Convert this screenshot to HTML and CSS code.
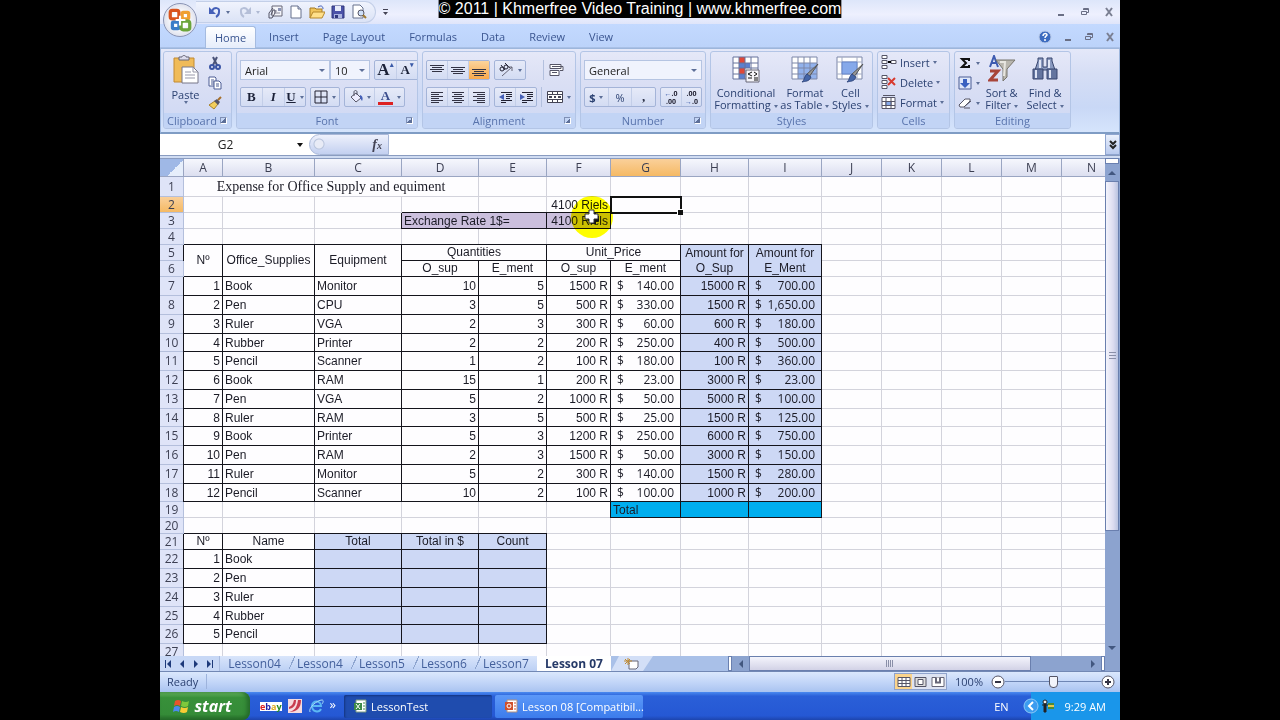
FILE: index.html
```html
<!DOCTYPE html>
<html lang="en">
<head>
    <meta charset="UTF-8">
    <meta name="viewport" content="width=device-width, initial-scale=1.0">
    <title>LessonTest - Microsoft Excel</title>
    <link rel="stylesheet" href="styles.css">
</head>
<body>
    <div class="banner">© 2011 | Khmerfree Video Training | www.khmerfree.com</div>

    <div class="app">
        <!-- Title bar and tabs -->
        <header class="top">
            <button class="office" aria-label="Office button">
                <svg viewBox="0 0 24 24" width="26" height="26" fill="none" stroke-width="3">
                    <rect x="3" y="3" width="8" height="8" rx="2" stroke="#d9541e"/>
                    <rect x="14" y="5" width="6" height="6" rx="1" stroke="#f0a030"/>
                    <rect x="5" y="14" width="6" height="6" rx="1" stroke="#3b7dc8"/>
                    <rect x="13" y="13" width="8" height="8" rx="2" stroke="#6ba53a"/>
                    <path d="M8 12h9M12 8v9" stroke="#fff" stroke-width="2"/>
                </svg>
            </button>
            <div class="titlebar">
                <div class="quick">
                    <button aria-label="Undo"><svg viewBox="0 0 16 16" width="16" height="16" fill="none"><path d="M5 7C7 3 13 3 12 8c0 2-1 4-3 5" stroke="#4560b8" stroke-width="2"/><path d="M2 3v7h7z" fill="#4560b8"/></svg></button>
                    <span class="drop"></span>
                    <button aria-label="Redo"><svg viewBox="0 0 16 16" width="16" height="16" fill="none"><path d="M11 7C9 3 3 3 4 8c0 2 1 4 3 5" stroke="#b5bfd8" stroke-width="2"/><path d="M14 3v7H7z" fill="#b5bfd8"/></svg></button>
                    <span class="drop faint"></span>
                    <button aria-label="Attach"><svg viewBox="0 0 16 16" width="16" height="16"><path d="M5 2h10v10H5z" fill="#f4f5fa" stroke="#667"/><path d="M7 9h6M7 7h3" stroke="#889"/><path d="M11 4h3v3h-3z" fill="#8a93b5"/><path d="M6 4L2 9v5h3l3-5V6H6l-2 5" fill="none" stroke="#556"/></svg></button>
                    <button aria-label="New"><svg viewBox="0 0 16 16" width="16" height="16"><path d="M3 2h7l3 3v9H3z" fill="#fff" stroke="#66708c"/><path d="M10 2v3h3" fill="#ccd3e8" stroke="#66708c"/></svg></button>
                    <button aria-label="Open"><svg viewBox="0 0 16 16" width="16" height="16"><path d="M1 14V4h5l1 1h6v3" fill="#f1c55c" stroke="#a67a20"/><path d="M1 14l3-6h12l-3 6z" fill="#ffe08a" stroke="#b5872a"/><path d="M9 3c3-2 5-1 5 2" fill="none" stroke="#4560b8"/></svg></button>
                    <button aria-label="Save"><svg viewBox="0 0 16 16" width="16" height="16"><path d="M2 2h12v12H2z" fill="#4b52a8" stroke="#30367c"/><path d="M5 2h6v5H5z" fill="#e8ecfa"/><path d="M4 10h8v4H4z" fill="#aab4e0"/><path d="M5 11h3v3H5z" fill="#30367c"/></svg></button>
                    <button aria-label="Print preview"><svg viewBox="0 0 16 16" width="16" height="16"><path d="M2 1h7l3 3v10H2z" fill="#fff" stroke="#66708c"/><circle cx="10" cy="9" r="3" fill="#cfe0f8" stroke="#556"/><path d="M12 11l3 3" stroke="#a07a30" stroke-width="2"/></svg></button>
                </div>
                <button class="more" aria-label="Customize toolbar"><svg viewBox="0 0 7 7" width="7" height="7"><path d="M1 0h5v1H1zM1 3h5L3.500 6z" fill="#445"/></svg></button>
                <div class="window-buttons">
                    <button aria-label="Minimize"><svg viewBox="0 0 10 10" width="10" height="10"><path d="M2 8h6" stroke="#6a6f85" stroke-width="2"/></svg></button>
                    <button aria-label="Restore"><svg viewBox="0 0 10 10" width="10" height="10" fill="none" stroke="#6a6f85"><path d="M1.500 4.500h5v3h-5zM3.500 3V1.500h5v4H7M3 2.500h6"/></svg></button>
                    <button aria-label="Close"><svg viewBox="0 0 10 10" width="10" height="10"><path d="M2 1l6 8M8 1L2 9" stroke="#7a7f92" stroke-width="2"/></svg></button>
                </div>
            </div>
            <nav class="tabs">
                <button class="tab active">Home</button>
                <button class="tab">Insert</button>
                <button class="tab">Page Layout</button>
                <button class="tab">Formulas</button>
                <button class="tab">Data</button>
                <button class="tab">Review</button>
                <button class="tab">View</button>
                <div class="window-buttons book">
                    <button aria-label="Help"><svg viewBox="0 0 14 14" width="14" height="14"><circle cx="7" cy="7" r="6" fill="#3c6cc0" stroke="#b9c9e8"/><path d="M5 6c0-3 4-3 4-1 0 1-2 1-2 3M7 9v2" fill="none" stroke="#fff" stroke-width="1.5"/></svg></button>
                    <button aria-label="Minimize workbook"><svg viewBox="0 0 10 10" width="10" height="10"><path d="M2 8h6" stroke="#6a6f85" stroke-width="2"/></svg></button>
                    <button aria-label="Restore workbook"><svg viewBox="0 0 10 10" width="10" height="10" fill="none" stroke="#6a6f85"><path d="M1.500 4.500h5v3h-5zM3.500 3V1.500h5v4H7M3 2.500h6"/></svg></button>
                    <button aria-label="Close workbook"><svg viewBox="0 0 10 10" width="10" height="10"><path d="M2 1l6 8M8 1L2 9" stroke="#7a7f92" stroke-width="2"/></svg></button>
                </div>
            </nav>
        </header>

        <!-- Ribbon -->
        <div class="ribbon">
            <section class="group clipboard">
                <div class="group-body row">
                    <button class="big">
                        <svg viewBox="0 0 28 30" width="28" height="30"><path d="M2 3h20v24H2z" fill="#f0bb58" stroke="#c28a30"/><path d="M7 5V2h3c0-2 4-2 4 0h3v3z" fill="#dde" stroke="#667"/><path d="M10 12h11l5 5v11H10z" fill="#fff" stroke="#778"/><path d="M21 12v5h5M13 17h6M13 20h10M13 23h10" fill="none" stroke="#99a"/></svg>
                        <span>Paste</span>
                        <span class="drop"></span>
                    </button>
                    <div class="stack">
                        <button aria-label="Cut"><svg viewBox="0 0 14 14" width="14" height="14" fill="none"><path d="M5 1l4 8M9 1L5 9" stroke="#4a5378" stroke-width="2"/><circle cx="4" cy="11" r="2" stroke="#3a54a4" stroke-width="2"/><circle cx="10" cy="11" r="2" stroke="#3a54a4" stroke-width="2"/></svg></button>
                        <button aria-label="Copy"><svg viewBox="0 0 14 14" width="14" height="14" fill="#fff" stroke="#4c5d94"><path d="M1 1h6l1 1v8H1z"/><path d="M3 4h3M3 6h3M3 8h3"/><path d="M6 5h5l2 2v6H6z"/><path d="M8 8h3M8 10h3"/></svg></button>
                        <button aria-label="Format painter"><svg viewBox="0 0 14 14" width="14" height="14"><path d="M1 9l6-4 3 3-4 5z" fill="#f3cf5c" stroke="#a8822a"/><path d="M6 5l3-2 3 3-2 3z" fill="#556"/><path d="M10 4l3-3" stroke="#a8702a" stroke-width="2"/></svg></button>
                    </div>
                </div>
                <h2>Clipboard<span class="launcher"></span></h2>
            </section>

            <section class="group font">
                <div class="group-body">
                    <div class="row">
                        <div class="row joined">
                            <select class="font-name" aria-label="Font"><option>Arial</option></select>
                            <select class="font-size" aria-label="Font size"><option>10</option></select>
                        </div>
                        <div class="box">
                            <button class="serif large" aria-label="Grow font">A<sup>▴</sup></button>
                            <button class="serif" aria-label="Shrink font">A<sup>▾</sup></button>
                        </div>
                    </div>
                    <div class="row">
                        <div class="box">
                            <button class="serif">B</button>
                            <button class="serif"><i>I</i></button>
                            <button class="serif"><u>U</u><span class="drop"></span></button>
                        </div>
                        <div class="box">
                            <button aria-label="Borders"><svg viewBox="0 0 14 14" width="14" height="14" fill="none" stroke="#223"><path d="M1 1h12v12H1zM7 1v12M1 7h12"/></svg><span class="drop"></span></button>
                        </div>
                        <div class="box">
                            <button aria-label="Fill color"><svg viewBox="0 0 14 14" width="14" height="14"><path d="M2 7l5-4 5 5-5 4z" fill="#eef" stroke="#556"/><path d="M5 6V2c0-2 3-2 3 0v3" fill="none" stroke="#556"/><path d="M11 5c3 1 3 4 2 6l-2-3z" fill="#4560b8"/></svg><span class="drop"></span></button>
                            <button class="font-color" aria-label="Font color"><span class="serif">A</span><span class="drop"></span></button>
                        </div>
                    </div>
                </div>
                <h2>Font<span class="launcher"></span></h2>
            </section>

            <section class="group alignment">
                <div class="group-body">
                    <div class="row">
                        <div class="box">
                            <button aria-label="Top align"><svg viewBox="0 0 14 14" width="14" height="14" stroke="#334"><path d="M0 2.500h14M2 4.500h10M0 6.500h14M2 8.500h10"/></svg></button>
                            <button aria-label="Middle align"><svg viewBox="0 0 14 14" width="14" height="14" stroke="#334"><path d="M0 4.500h14M2 6.500h10M0 8.500h14M2 10.500h10"/></svg></button>
                            <button class="on" aria-label="Bottom align"><svg viewBox="0 0 14 14" width="14" height="14" stroke="#334"><path d="M0 6.500h14M2 8.500h10M0 10.500h14M2 12.500h10"/></svg></button>
                        </div>
                        <div class="box">
                            <button aria-label="Orientation"><svg viewBox="0 0 16 16" width="16" height="16" fill="none" stroke="#223"><circle cx="4" cy="7" r="2"/><path d="M3 3l4 5M7 1l5 5"/><circle cx="8" cy="5" r="2"/><path d="M4 14L14 5M14 9V5h-4" stroke="#667"/></svg><span class="drop"></span></button>
                        </div>
                        <button class="plain wrap" aria-label="Wrap text"><svg viewBox="0 0 16 16" width="16" height="16" fill="#fff" stroke="#556"><path d="M1 2.500h11v4H1zM1 8.500h9v5H1zM3 4.500h11v4h-3M3 10.500h5"/></svg></button>
                    </div>
                    <div class="row">
                        <div class="box">
                            <button aria-label="Align left"><svg viewBox="0 0 14 14" width="14" height="14" stroke="#334"><path d="M1 2.500h12M1 4.500h8M1 6.500h12M1 8.500h8M1 10.500h12M1 12.500h8"/></svg></button>
                            <button aria-label="Center"><svg viewBox="0 0 14 14" width="14" height="14" stroke="#334"><path d="M1 2.500h12M3 4.500h8M1 6.500h12M3 8.500h8M1 10.500h12M3 12.500h8"/></svg></button>
                            <button aria-label="Align right"><svg viewBox="0 0 14 14" width="14" height="14" stroke="#334"><path d="M1 2.500h12M5 4.500h8M1 6.500h12M5 8.500h8M1 10.500h12M5 12.500h8"/></svg></button>
                        </div>
                        <div class="box">
                            <button aria-label="Decrease indent"><svg viewBox="0 0 14 14" width="14" height="14" stroke="#223"><path d="M3 2.500h11M8 4.500h6M8 6.500h6M8 8.500h4M3 10.500h11M3 12.500h5"/><path d="M6 4v6L1 7z" fill="#4560b8" stroke="none"/></svg></button>
                            <button aria-label="Increase indent"><svg viewBox="0 0 14 14" width="14" height="14" stroke="#223"><path d="M3 2.500h11M8 4.500h6M8 6.500h6M8 8.500h4M3 10.500h11M3 12.500h5"/><path d="M1 4v6l5-3z" fill="#4560b8" stroke="none"/></svg></button>
                        </div>
                        <button class="plain" aria-label="Merge and center"><svg viewBox="0 0 16 14" width="16" height="14" fill="#fff" stroke="#445"><path d="M.5 1.500h15v11H.5zM.5 4.500h15M.5 9.500h15M5.500 1.500v3M10.500 1.500v3M5.500 9.500v3M10.500 9.500v3"/><path d="M2 7h3M11 7h3M7 7h2" stroke-width="2"/></svg><span class="drop"></span></button>
                    </div>
                </div>
                <h2>Alignment<span class="launcher"></span></h2>
            </section>

            <section class="group number">
                <div class="group-body">
                    <div class="row">
                        <select aria-label="Number format"><option>General</option></select>
                    </div>
                    <div class="row">
                        <div class="box three">
                            <button><b>$</b><span class="drop"></span></button>
                            <button>%</button>
                            <button class="serif">,</button>
                        </div>
                        <div class="box">
                            <button class="decimal" aria-label="Increase decimal"><span><em>←</em>.0</span><span>.00</span></button>
                            <button class="decimal" aria-label="Decrease decimal"><span>.00</span><span><em>→</em>.0</span></button>
                        </div>
                    </div>
                </div>
                <h2>Number<span class="launcher"></span></h2>
            </section>

            <section class="group styles">
                <div class="group-body row">
                    <button class="big">
                        <svg viewBox="0 0 28 28" width="28" height="28"><path d="M1 2h25v22H1z" fill="#fff"/><path d="M7 2h6v6H7zM7 13h6v6H7z" fill="#e04838"/><path d="M7 8h11v5H7zM7 19h6v5H7z" fill="#5c80d0"/><path d="M1 2h25v22H1zM7 2v22M13 2v22M19 2v22M1 8h25M1 13h25M1 19h25" fill="none" stroke="#66739c"/><path d="M14 15h13v12H14z" fill="#f5f5fa" stroke="#667"/><path d="M20 17l-4 2 4 2M16 23h4M22 17l3 2-3 2M22 23h4M22 25h4" fill="none" stroke="#111"/></svg>
                        <span>Conditional</span>
                        <span>Formatting<i class="drop"></i></span>
                    </button>
                    <button class="big">
                        <svg viewBox="0 0 28 28" width="28" height="28"><path d="M1 2h25v22H1z" fill="#fff"/><path d="M7 8h19v16H7z" fill="#92b2ec"/><path d="M1 2h25v22H1zM7 2v22M13 2v22M19 2v22M1 8h25M1 13h25M1 19h25" fill="none" stroke="#7c87a8"/><path d="M27 9l-9 13-3-2z" fill="#999" stroke="#555"/><path d="M16 19l4 3c-2 5-6 4-9 5 3-2 2-6 5-8z" fill="#4566a8" stroke="#334a80"/></svg>
                        <span>Format</span>
                        <span>as Table<i class="drop"></i></span>
                    </button>
                    <button class="big">
                        <svg viewBox="0 0 28 28" width="28" height="28"><path d="M1 2h25v22H1z" fill="#fff" stroke="#7c87a8"/><path d="M1 7h25M1 19h25M6 2v22M21 2v22" stroke="#a4acc4"/><path d="M6 7h15v12H6z" fill="#86a9ea" stroke="#6484c8"/><path d="M27 9l-9 13-3-2z" fill="#999" stroke="#555"/><path d="M16 19l4 3c-2 5-6 4-9 5 3-2 2-6 5-8z" fill="#4566a8" stroke="#334a80"/></svg>
                        <span>Cell</span>
                        <span>Styles<i class="drop"></i></span>
                    </button>
                </div>
                <h2>Styles</h2>
            </section>

            <section class="group cells">
                <div class="group-body stack">
                    <button><svg viewBox="0 0 16 14" width="16" height="14" fill="#fff" stroke="#556"><path d="M1 .5h5v3H1zM1 5.500h5v3H1zM1 10.500h5v3H1zM10 5.500h5v3h-5z"/><path d="M7 7h3" stroke="#000" stroke-width="2"/></svg>Insert <span class="drop"></span></button>
                    <button><svg viewBox="0 0 16 14" width="16" height="14" fill="#fff" stroke="#556"><path d="M1 .5h5v3H1zM1 5.500h5v3H1zM1 10.500h5v3H1z"/><path d="M7 3l7 7M14 3l-7 7" stroke="#d83a2e" stroke-width="2"/></svg>Delete <span class="drop"></span></button>
                    <button><svg viewBox="0 0 16 14" width="16" height="14" fill="#fff" stroke="#556"><path d="M1 2.500h13v11H1zM1 6.500h13M1 10.500h13M5 2.500v11M10 2.500v11"/><path d="M5 6.500h5v4H5z" fill="#86a9ea"/><path d="M2 .5h12"/></svg>Format <span class="drop"></span></button>
                </div>
                <h2>Cells</h2>
            </section>

            <section class="group editing">
                <div class="group-body row">
                    <div class="stack">
                        <button aria-label="Sum"><svg viewBox="0 0 14 14" width="14" height="14" fill="none" stroke="#111" stroke-width="2"><path d="M11 5V3H4l4 4-4 4h7V9"/></svg><span class="drop"></span></button>
                        <button aria-label="Fill"><svg viewBox="0 0 14 14" width="14" height="14"><path d="M1 1h12v12H1z" fill="#dfe8fa" stroke="#4a5c94"/><path d="M5 3h4v4h3l-5 5-5-5h3z" fill="#3a62c0"/></svg><span class="drop"></span></button>
                        <button aria-label="Clear"><svg viewBox="0 0 14 14" width="14" height="14"><path d="M1 9l6-6h5v2l-6 6H2z" fill="#fff" stroke="#556"/><path d="M6 11l7-6M6 12h6" stroke="#556"/></svg><span class="drop"></span></button>
                    </div>
                    <button class="big">
                        <svg viewBox="0 0 28 28" width="28" height="28"><path d="M2 12L6 1l4 11M3 8h6" fill="none" stroke="#3f5cb0" stroke-width="2"/><path d="M2 16h8L2 25h8" fill="none" stroke="#a8453a" stroke-width="3"/><path d="M8 5h19l-8 9v8l-4 4V14z" fill="#b9b6ae" stroke="#77746c"/><path d="M12 7h5l-1 14" fill="none" stroke="#e8e6e0" stroke-width="2"/></svg>
                        <span>Sort &amp;</span>
                        <span>Filter<i class="drop"></i></span>
                    </button>
                    <button class="big">
                        <svg viewBox="0 0 28 28" width="28" height="28" stroke="#39466e"><path d="M7 3h5v9h4V3h5v3l3 9H4l3-9z" fill="#8a9ac0"/><path d="M2 14h10v10H2zM16 14h10v10H16z" fill="#64759f"/><path d="M5 15v8M19 15v8M9 5v8M18 5v8" stroke="#dfe5f5" stroke-width="2"/></svg>
                        <span>Find &amp;</span>
                        <span>Select<i class="drop"></i></span>
                    </button>
                </div>
                <h2>Editing</h2>
            </section>
        </div>

        <!-- Formula bar -->
        <div class="formula-bar">
            <input class="name-box" aria-label="Name box" value="G2">
            <button class="name-drop" aria-label="Names"><span class="drop"></span></button>
            <button class="fx" aria-label="Insert function"><i>f<sub>x</sub></i></button>
            <input class="formula" aria-label="Formula">
            <button class="expand" aria-label="Expand formula bar"><svg viewBox="0 0 8 10" width="8" height="10" fill="none" stroke="#222" stroke-width="2"><path d="M1 1l3 3 3-3M1 5l3 3 3-3"/></svg></button>
        </div>

        <!-- Worksheet -->
        <main class="sheet">
            <div class="grid">
                <table>
                    <colgroup>
                        <col class="w-head"><col class="w-a"><col class="w-b"><col class="w-c"><col class="w-d"><col class="w-e"><col class="w-f"><col class="w-g"><col class="w-h"><col class="w-i"><col class="w-j"><col class="w-j"><col class="w-j"><col class="w-j"><col class="w-j">
                    </colgroup>
                    <thead>
                        <tr><th class="corner"></th><th>A</th><th>B</th><th>C</th><th>D</th><th>E</th><th>F</th><th class="current">G</th><th>H</th><th>I</th><th>J</th><th>K</th><th>L</th><th>M</th><th>N</th></tr>
                    </thead>
                    <tbody>
                        <tr class="title"><th>1</th><td colspan="4">Expense for Office Supply and equiment</td><td></td><td></td><td></td><td></td><td></td><td></td><td></td><td></td><td></td><td></td></tr>
                        <tr><th class="current">2</th><td></td><td></td><td></td><td></td><td></td><td class="num">4100 Riels</td><td class="selected"></td><td></td><td></td><td></td><td></td><td></td><td></td><td></td></tr>
                        <tr><th>3</th><td></td><td></td><td></td><td class="b rate" colspan="2">Exchange Rate 1$=</td><td class="b rate num">4100 Riels</td><td></td><td></td><td></td><td></td><td></td><td></td><td></td><td></td></tr>
                        <tr><th>4</th><td></td><td></td><td></td><td></td><td></td><td></td><td></td><td></td><td></td><td></td><td></td><td></td><td></td><td></td></tr>
                        <tr class="heads"><th>5</th><td class="b" rowspan="2">Nº</td><td class="b" rowspan="2">Office_Supplies</td><td class="b" rowspan="2">Equipment</td><td class="b" colspan="2">Quantities</td><td class="b" colspan="2">Unit_Price</td><td class="b blue" rowspan="2">Amount for<br>O_Sup</td><td class="b blue" rowspan="2">Amount for<br>E_Ment</td><td></td><td></td><td></td><td></td><td></td></tr>
                        <tr class="heads"><th>6</th><td class="b">O_sup</td><td class="b">E_ment</td><td class="b">O_sup</td><td class="b">E_ment</td><td></td><td></td><td></td><td></td><td></td></tr>
                    </tbody>
                    <tbody class="items">
                        <tr><th>7</th><td class="b num">1</td><td class="b">Book</td><td class="b">Monitor</td><td class="b num">10</td><td class="b num">5</td><td class="b num">1500 R</td><td class="b money"><span>$</span>140.00</td><td class="b blue num">15000 R</td><td class="b blue money"><span>$</span>700.00</td><td></td><td></td><td></td><td></td><td></td></tr>
                        <tr><th>8</th><td class="b num">2</td><td class="b">Pen</td><td class="b">CPU</td><td class="b num">3</td><td class="b num">5</td><td class="b num">500 R</td><td class="b money"><span>$</span>330.00</td><td class="b blue num">1500 R</td><td class="b blue money"><span>$</span>1,650.00</td><td></td><td></td><td></td><td></td><td></td></tr>
                        <tr><th>9</th><td class="b num">3</td><td class="b">Ruler</td><td class="b">VGA</td><td class="b num">2</td><td class="b num">3</td><td class="b num">300 R</td><td class="b money"><span>$</span>60.00</td><td class="b blue num">600 R</td><td class="b blue money"><span>$</span>180.00</td><td></td><td></td><td></td><td></td><td></td></tr>
                        <tr><th>10</th><td class="b num">4</td><td class="b">Rubber</td><td class="b">Printer</td><td class="b num">2</td><td class="b num">2</td><td class="b num">200 R</td><td class="b money"><span>$</span>250.00</td><td class="b blue num">400 R</td><td class="b blue money"><span>$</span>500.00</td><td></td><td></td><td></td><td></td><td></td></tr>
                        <tr><th>11</th><td class="b num">5</td><td class="b">Pencil</td><td class="b">Scanner</td><td class="b num">1</td><td class="b num">2</td><td class="b num">100 R</td><td class="b money"><span>$</span>180.00</td><td class="b blue num">100 R</td><td class="b blue money"><span>$</span>360.00</td><td></td><td></td><td></td><td></td><td></td></tr>
                        <tr><th>12</th><td class="b num">6</td><td class="b">Book</td><td class="b">RAM</td><td class="b num">15</td><td class="b num">1</td><td class="b num">200 R</td><td class="b money"><span>$</span>23.00</td><td class="b blue num">3000 R</td><td class="b blue money"><span>$</span>23.00</td><td></td><td></td><td></td><td></td><td></td></tr>
                        <tr><th>13</th><td class="b num">7</td><td class="b">Pen</td><td class="b">VGA</td><td class="b num">5</td><td class="b num">2</td><td class="b num">1000 R</td><td class="b money"><span>$</span>50.00</td><td class="b blue num">5000 R</td><td class="b blue money"><span>$</span>100.00</td><td></td><td></td><td></td><td></td><td></td></tr>
                        <tr><th>14</th><td class="b num">8</td><td class="b">Ruler</td><td class="b">RAM</td><td class="b num">3</td><td class="b num">5</td><td class="b num">500 R</td><td class="b money"><span>$</span>25.00</td><td class="b blue num">1500 R</td><td class="b blue money"><span>$</span>125.00</td><td></td><td></td><td></td><td></td><td></td></tr>
                        <tr><th>15</th><td class="b num">9</td><td class="b">Book</td><td class="b">Printer</td><td class="b num">5</td><td class="b num">3</td><td class="b num">1200 R</td><td class="b money"><span>$</span>250.00</td><td class="b blue num">6000 R</td><td class="b blue money"><span>$</span>750.00</td><td></td><td></td><td></td><td></td><td></td></tr>
                        <tr><th>16</th><td class="b num">10</td><td class="b">Pen</td><td class="b">RAM</td><td class="b num">2</td><td class="b num">3</td><td class="b num">1500 R</td><td class="b money"><span>$</span>50.00</td><td class="b blue num">3000 R</td><td class="b blue money"><span>$</span>150.00</td><td></td><td></td><td></td><td></td><td></td></tr>
                        <tr><th>17</th><td class="b num">11</td><td class="b">Ruler</td><td class="b">Monitor</td><td class="b num">5</td><td class="b num">2</td><td class="b num">300 R</td><td class="b money"><span>$</span>140.00</td><td class="b blue num">1500 R</td><td class="b blue money"><span>$</span>280.00</td><td></td><td></td><td></td><td></td><td></td></tr>
                        <tr><th>18</th><td class="b num">12</td><td class="b">Pencil</td><td class="b">Scanner</td><td class="b num">10</td><td class="b num">2</td><td class="b num">100 R</td><td class="b money"><span>$</span>100.00</td><td class="b blue num">1000 R</td><td class="b blue money"><span>$</span>200.00</td><td></td><td></td><td></td><td></td><td></td></tr>
                    </tbody>
                    <tbody>
                        <tr><th>19</th><td></td><td></td><td></td><td></td><td></td><td></td><td class="b cyan">Total</td><td class="b cyan"></td><td class="b cyan"></td><td></td><td></td><td></td><td></td><td></td></tr>
                        <tr><th>20</th><td></td><td></td><td></td><td></td><td></td><td></td><td></td><td></td><td></td><td></td><td></td><td></td><td></td><td></td></tr>
                        <tr class="heads"><th>21</th><td class="b">Nº</td><td class="b">Name</td><td class="b blue">Total</td><td class="b blue">Total in $</td><td class="b blue">Count</td><td></td><td></td><td></td><td></td><td></td><td></td><td></td><td></td><td></td></tr>
                    </tbody>
                    <tbody class="items">
                        <tr><th>22</th><td class="b num">1</td><td class="b">Book</td><td class="b blue"></td><td class="b blue"></td><td class="b blue"></td><td></td><td></td><td></td><td></td><td></td><td></td><td></td><td></td><td></td></tr>
                        <tr><th>23</th><td class="b num">2</td><td class="b">Pen</td><td class="b blue"></td><td class="b blue"></td><td class="b blue"></td><td></td><td></td><td></td><td></td><td></td><td></td><td></td><td></td><td></td></tr>
                        <tr><th>24</th><td class="b num">3</td><td class="b">Ruler</td><td class="b blue"></td><td class="b blue"></td><td class="b blue"></td><td></td><td></td><td></td><td></td><td></td><td></td><td></td><td></td><td></td></tr>
                        <tr><th>25</th><td class="b num">4</td><td class="b">Rubber</td><td class="b blue"></td><td class="b blue"></td><td class="b blue"></td><td></td><td></td><td></td><td></td><td></td><td></td><td></td><td></td><td></td></tr>
                        <tr><th>26</th><td class="b num">5</td><td class="b">Pencil</td><td class="b blue"></td><td class="b blue"></td><td class="b blue"></td><td></td><td></td><td></td><td></td><td></td><td></td><td></td><td></td><td></td></tr>
                    </tbody>
                    <tbody>
                        <tr><th>27</th><td></td><td></td><td></td><td></td><td></td><td></td><td></td><td></td><td></td><td></td><td></td><td></td><td></td><td></td></tr>
                    </tbody>
                </table>
                <div class="spot"></div>
                <svg class="cursor" viewBox="0 0 16 16" width="16" height="16"><path d="M7 3h5v4h3v5h-3v3H7v-3H4V7h3z" fill="#111"/><path d="M5 1h5v4h4v5h-4v4H5v-4H1V5h4z" fill="#fff" stroke="#333"/></svg>
            </div>
            <div class="vscroll">
                <span class="split"></span>
                <button aria-label="Scroll up"><span class="tri up"></span></button>
                <div class="vthumb"></div>
                <div class="vtrack"></div>
                <button aria-label="Scroll down"><span class="tri down"></span></button>
            </div>
        </main>

        <!-- Sheet tabs and horizontal scroll -->
        <div class="sheet-bar">
            <div class="sheet-nav">
                <button aria-label="First sheet"><svg viewBox="0 0 8 8" width="8" height="8" fill="#1e3a7a"><path d="M1 0h1v8H1zM7 0v8L3 4z"/></svg></button>
                <button aria-label="Previous sheet"><svg viewBox="0 0 8 8" width="8" height="8" fill="#1e3a7a"><path d="M6 0v8L2 4z"/></svg></button>
                <button aria-label="Next sheet"><svg viewBox="0 0 8 8" width="8" height="8" fill="#1e3a7a"><path d="M2 0v8l4-4z"/></svg></button>
                <button aria-label="Last sheet"><svg viewBox="0 0 8 8" width="8" height="8" fill="#1e3a7a"><path d="M1 0v8l4-4zM6 0h1v8H6z"/></svg></button>
            </div>
            <button class="sheet-tab">Lesson04</button>
            <button class="sheet-tab">Lesson4</button>
            <button class="sheet-tab">Lesson5</button>
            <button class="sheet-tab">Lesson6</button>
            <button class="sheet-tab">Lesson7</button>
            <button class="sheet-tab active">Lesson 07</button>
            <button class="new-sheet" aria-label="Insert worksheet"><svg viewBox="0 0 16 12" width="16" height="12"><path d="M5 3h9v6l-2 2H5z" fill="#fff" stroke="#667"/><path d="M4 0v7M0 3h8M1 1l5 5M6 1L1 6" stroke="#c08a30"/></svg></button>
            <div class="hscroll">
                <span class="grab"></span>
                <button aria-label="Scroll left"><span class="tri left"></span></button>
                <div class="hthumb"></div>
                <div class="htrack"></div>
                <button aria-label="Scroll right"><span class="tri right"></span></button>
                <span class="grab"></span>
            </div>
        </div>

        <!-- Status bar -->
        <footer class="status">
            <span class="ready">Ready</span>
            <div class="views">
                <button class="on" aria-label="Normal view"><svg viewBox="0 0 14 12" width="14" height="12" fill="#fff" stroke="#556"><path d="M1 1.500h12v9H1zM1 4.500h12M1 7.500h12M5 1.500v9M9 1.500v9"/></svg></button>
                <button aria-label="Page layout view"><svg viewBox="0 0 14 12" width="14" height="12" fill="#ddd" stroke="#556"><path d="M1 1.500h11v9H1z"/><path d="M4 3.500h5v5H4z" fill="#fff"/></svg></button>
                <button aria-label="Page break view"><svg viewBox="0 0 14 12" width="14" height="12" fill="#fff" stroke="#667"><path d="M1 1.500h12v9H1z"/><path d="M5 1.500v5h4v-5" stroke-width="2"/></svg></button>
            </div>
            <label for="zoom">100%</label>
            <button class="round" aria-label="Zoom out"><svg viewBox="0 0 14 14" width="14" height="14"><circle cx="7" cy="7" r="6" fill="#fff" stroke="#556"/><path d="M4 7h6" stroke="#334" stroke-width="2"/></svg></button>
            <input type="range" id="zoom" min="0" max="200" value="100">
            <button class="round" aria-label="Zoom in"><svg viewBox="0 0 14 14" width="14" height="14"><circle cx="7" cy="7" r="6" fill="#fff" stroke="#556"/><path d="M4 7h6M7 4v6" stroke="#334" stroke-width="2"/></svg></button>
        </footer>

        <!-- Windows taskbar -->
        <div class="taskbar">
            <button class="start">
                <svg viewBox="0 0 18 18" width="18" height="18"><path d="M2 4q3-2 6 0L7 9Q4 7 1 9z" fill="#e8542c"/><path d="M9 4q4 2 7 0l-1 5q-3 2-7 0z" fill="#7ec83c"/><path d="M1 10q3-2 6 0l-1 5q-3-2-6 0z" fill="#4c8af0"/><path d="M8 10q4 2 7 0l-1 5q-3 2-7 0z" fill="#f8cc34"/></svg>
                start
            </button>
            <div class="launch">
                <a href="#" class="ebay" aria-label="eBay"><b>e</b><b>b</b><b>a</b><b>y</b></a>
                <a href="#" aria-label="Media"><svg viewBox="0 0 14 14" width="14" height="14"><path d="M0 0h14v14H0z" fill="#f5dbe0"/><path d="M1 13c5-1 8-4 9-12h3c0 8-4 12-12 12zM1 8c3-1 4-3 5-7h2c0 5-2 8-7 9z" fill="#c83c50"/></svg></a>
                <a href="#" aria-label="Internet Explorer"><svg viewBox="0 0 16 16" width="16" height="16" fill="none"><path d="M13 11c-2 4-9 3-9-3s9-6 9 0H5" stroke="#5cb8f4" stroke-width="2"/><path d="M2 14C0 10 9 2 14 2c2 0 1 3 0 4" stroke="#a8dcf8"/></svg></a>
                <span class="chevrons">»</span>
            </div>
            <button class="task pressed"><svg viewBox="0 0 14 14" width="14" height="14"><path d="M3 1h10v12H3z" fill="#fff" stroke="#7a9a80"/><path d="M1 4h8v7H1z" fill="#3c8a48"/><path d="M3 5l4 5M7 5l-4 5" stroke="#fff"/><path d="M10 4h2M10 7h2M10 10h2" stroke="#3c8a48"/></svg>LessonTest</button>
            <button class="task"><svg viewBox="0 0 14 14" width="14" height="14"><path d="M3 1h10v12H3z" fill="#fff" stroke="#b09080"/><path d="M1 3h8v8H1z" fill="#d0502c"/><circle cx="5" cy="7" r="2" fill="none" stroke="#fff"/><path d="M10 4h2M10 7h2M10 10h2" stroke="#d0502c"/></svg>Lesson 08 [Compatibil...</button>
            <span class="lang">EN</span>
            <div class="tray">
                <button aria-label="Show hidden icons"><svg viewBox="0 0 16 16" width="16" height="16"><circle cx="8" cy="8" r="7" fill="#3c9cf0" stroke="#8cc8f8"/><path d="M10 4L6 8l4 4" fill="none" stroke="#fff" stroke-width="2"/></svg></button>
                <svg viewBox="0 0 14 14" width="14" height="14"><circle cx="4" cy="3" r="2" fill="#eee" stroke="#222"/><path d="M3 5h2v8H3zM1 6h6" fill="#222" stroke="#222"/><path d="M7 4h6v6H7z" fill="#4a8a3c"/><path d="M7 6h6v2H7z" fill="#e8c84c"/></svg>
                <time>9:29 AM</time>
            </div>
        </div>
    </div>
</body>
</html>
```
FILE: styles.css
```css
* { box-sizing: border-box; }
body { margin: 0; padding: 0 12.5%; height: 100vh; background: #000; font-family: "Open Sans", sans-serif; font-size: 11px; color: #2c4272; overflow: hidden; }
button, input, select { font: inherit; color: inherit; }
button { display: flex; align-items: center; justify-content: center; gap: 4px; background: none; border: 0; padding: 0; white-space: nowrap; }
svg { flex: none; display: block; }
.app { display: flex; flex-direction: column; height: 100%; overflow: hidden; background: #bfd5f5; }
.banner { position: absolute; z-index: 5; top: 0; left: 50%; transform: translateX(-50%); background: #000; color: #fff; font: 16px/18px "Liberation Sans", sans-serif; white-space: nowrap; }

/* little arrows */
.drop { width: 0; height: 0; display: inline-block; border: 2px solid transparent; border-top: 3px solid #5d6f98; border-bottom: 0; vertical-align: middle; }
.faint { opacity: 0.4; }
.tri { width: 0; height: 0; border: 4px solid transparent; }
.up { border-bottom-color: #42577f; border-top: 0; }
.down { border-top-color: #42577f; border-bottom: 0; }
.left { border-right-color: #42577f; border-left: 0; }
.right { border-left-color: #42577f; border-right: 0; }

/* title bar and tabs */
.top { position: relative; flex: none; }
.titlebar { display: flex; align-items: center; height: 24px; padding: 0 6px 0 36px; background: linear-gradient(#dde6fa, #eef0fe 60%, #dfe5fa); }
.office { position: absolute; top: 3px; left: 3px; width: 34px; height: 34px; border: 1px solid #8a94b4; border-radius: 50%; background: radial-gradient(#fff 30%, #d9dcea 80%, #b8bfd6); }
.quick { display: flex; align-items: center; gap: 5px; height: 22px; padding: 0 8px 0 11px; border: 1px solid #c3cfe8; border-left: 0; border-radius: 0 11px 11px 0; background: linear-gradient(#f0f3fd, #dbe3f6); }
.quick .drop { margin: 0 2px 0 -2px; }
.more { margin-left: 6px; }
.window-buttons { display: flex; align-items: center; gap: 14px; margin-left: auto; }
.window-buttons.book { gap: 11px; }
.tabs { display: flex; height: 24px; padding: 2px 5px 0 45px; gap: 2px; background: linear-gradient(#c3d9ff, #bcd3fa); border-bottom: 1px solid #a9c0e6; }
.tab { padding: 0 11px; font-size: 11px; color: #3a5590; }
.tab.active { margin-bottom: -1px; padding: 0 9px; border: 1px solid #a5bbe0; border-bottom: 0; border-radius: 3px 3px 0 0; background: linear-gradient(#fff, #e6edfb); }

/* ribbon */
.ribbon { display: flex; flex: none; gap: 4px; height: 86px; padding: 2px 2px 3px; border: 1px solid #9db6dc; border-bottom: 2px solid #7f9cc4; background: linear-gradient(#e4e8f9, #d6def5 30%, #c9d8f6 70%, #d5e4fc); }
.group { display: flex; flex: none; flex-direction: column; border: 1px solid #b3c5e6; border-radius: 3px; background: linear-gradient(#e5e8f8, #dadff4 40%, #ced8f4); overflow: hidden; }
.group h2 { position: relative; flex: none; margin: 0; font-size: 11px; line-height: 15px; font-weight: normal; text-align: center; color: #5873ac; background: #c2d4f5; }
.launcher { position: absolute; right: 4px; top: 4px; width: 7px; height: 7px; border: 1px solid #7f90b6; border-right-color: #fff; border-bottom-color: #fff; background: linear-gradient(135deg, transparent 50%, #5d6f98 50%); }
.group-body { flex: 1; display: flex; flex-direction: column; min-height: 0; padding: 8px 3px 0; gap: 7px; }
.row { display: flex; flex-direction: row; gap: 4px; }
.joined { gap: 0; }
.stack { display: flex; flex-direction: column; gap: 6px; }
.clipboard { width: 69px; }
.group.clipboard h2 { text-align: left; padding-left: 3px; }
.font { width: 182px; }
.alignment { width: 154px; }
.number { width: 126px; }
.styles { width: 163px; }
.cells { width: 73px; }
.editing { width: 117px; }
.box { display: flex; height: 20px; border: 1px solid #a4b4d8; border-radius: 2px; background: linear-gradient(#e6eaf8, #d3dcf3); }
.box button { flex: 1; min-width: 20px; padding: 0 3px; gap: 4px; }
.box button + button { border-left: 1px solid #c3cee8; }
.box .on { background: linear-gradient(#fbd49c, #f9a94c); }
.plain { gap: 4px; height: 20px; padding-left: 5px; border-left: 1px solid #b3c0de; }
.wrap { margin-left: 13px; }
.serif { font: bold 13px "Liberation Serif", serif; color: #1c2238; }
.large { font-size: 17px; }
.serif sup { font-size: 7px; margin-left: -4px; align-self: flex-start; color: #3a5aa8; }
.font-color .serif { color: #3a4c8c; border-bottom: 3px solid #d22; line-height: 12px; padding: 0 3px; }
select { appearance: none; height: 20px; padding: 0 4px; border: 1px solid #b5c4e2; border-radius: 0; background: #f0f3fd url("data:image/svg+xml,%3Csvg xmlns='http://www.w3.org/2000/svg' width='6' height='3'%3E%3Cpath d='M0 0h6L3 3z' fill='%235d6f98'/%3E%3C/svg%3E") no-repeat right 4px center; color: #222; }
.font-name { width: 90px; }
.font-size { width: 40px; }
.number select { width: 100%; }
.three { flex: 1; }
.decimal { flex-direction: column; font-size: 7px; line-height: 7px; font-weight: bold; color: #223; }
.decimal em { font-style: normal; color: #3a5aa8; }
.box .decimal { gap: 1px; padding: 0; }
.group .big { flex: 1 0 auto; flex-direction: column; justify-content: flex-start; gap: 0; line-height: 12px; }
.big svg { margin-bottom: 4px; }
.big i { margin-left: 3px; }
.styles .group-body, .clipboard .group-body, .editing .group-body { padding-top: 3px; gap: 2px; }
.clipboard .big { padding-left: 4px; }
.clipboard .stack { padding: 1px 6px; }
.cells .group-body { align-items: flex-start; padding-top: 1px; gap: 2px; }
.cells button { height: 18px; gap: 3px; }
.editing .stack { padding-top: 1px; }

/* formula bar */
.formula-bar { display: flex; flex: none; height: 22px; background: #fff; border-bottom: 1px solid #8a9cc0; }
.formula-bar input { border: 0; padding: 0; outline: 0; background: none; min-width: 0; color: #222; }
.formula-bar .name-box { width: 131px; font-size: 12px; text-align: center; }
.name-drop { width: 18px; }
.name-drop .drop { border-width: 4px 3px 0; border-top-color: #111; }
.fx { width: 80px; justify-content: flex-end; padding-right: 6px; border: 1px solid #a9b8d8; border-radius: 11px 0 0 11px; background: radial-gradient(circle at 9px 9px, #e8ebf6 4px, #b8c4dc 5px, transparent 6px), linear-gradient(#eef1fc, #c3d0f0); font: bold 14px/18px "Liberation Serif", serif; color: #445; }
.fx sub { font-size: 10px; line-height: 10px; vertical-align: baseline; }
.formula-bar .formula { flex: 1; }
.expand { width: 15px; border: 1px solid #8fa5cf; background: linear-gradient(#eaf0fc, #b9caee); }

/* worksheet */
.sheet { flex: 1; display: flex; min-height: 0; padding-top: 2px; background: #d0dcf2; }
.grid { position: relative; flex: 1; overflow: hidden; background: #fff; border-top: 1px solid #8a9cc0; }
table { width: 962px; table-layout: fixed; border-spacing: 0; font: 12px/14px "Liberation Sans", sans-serif; color: #1b1b26; }
.w-head { width: 24px; }
.w-a { width: 39px; }
.w-b { width: 92px; }
.w-c { width: 87px; }
.w-d { width: 77px; }
.w-e, .w-h { width: 68px; }
.w-f { width: 64px; }
.w-g { width: 70px; }
.w-i { width: 73px; }
.w-j { width: 60px; }
tr { height: 16px; }
td, th { padding: 0 2px; border-right: 1px solid #d3d3dc; border-bottom: 1px solid #d3d3dc; white-space: nowrap; overflow: hidden; }
td { background: #fefdff; }
th { padding: 0; font: 12px/14px "Open Sans", sans-serif; color: #3c3f52; background: #dfe4f8; border-color: #b4bfdc; }
thead tr { height: 18px; }
thead th { background: linear-gradient(#f6f7fd, #dcdff0); border-color: #9aa5c2; }
th.current { background: linear-gradient(#fad09a, #f5b964); }
thead .corner { background: linear-gradient(135deg, #9fb8e6 60%, #e6eefb 60%); }
.title { height: 20px; }
.title td { font: 14px/18px "Liberation Serif", serif; text-align: center; }
.heads td { text-align: center; line-height: 15px; padding: 0; }
.items tr { height: 19px; }
.items tr:nth-child(4n) { height: 18px; }
.b { border-color: #14141c; box-shadow: -1px 0 #14141c, 0 -1px #14141c; }
.num { text-align: right; }
.money { padding: 0 6px; text-align: right; font-family: "Open Sans", sans-serif; }
.money span { float: left; }
.blue { background: #cdd8f5; }
.rate { background: #cbbfdd; }
.cyan { background: #00aeef; }
.selected { position: relative; overflow: visible; outline: 2px solid #111; outline-offset: -1px; }
.selected::after { content: ""; position: absolute; right: -3px; bottom: -3px; width: 5px; height: 5px; background: #111; border: 1px solid #fff; border-width: 1px 0 0 1px; }
.spot { position: absolute; left: 411px; top: 37px; width: 42px; height: 42px; border-radius: 50%; background: #ffff00; mix-blend-mode: multiply; }
.cursor { position: absolute; left: 424px; top: 50px; }

.vscroll { display: flex; flex-direction: column; flex: none; width: 15px; padding-right: 1px; background: #8ca3cf; }
.vscroll button { height: 17px; }
.split { height: 6px; border: 1px solid #6a80b0; background: #fff; }
.vthumb { flex: 350; border: 1px solid #6a7fae; background: repeating-linear-gradient(#8a8fa8 0 1px, transparent 1px 3px) center / 7px 8px no-repeat, linear-gradient(90deg, #f4f4fc, #dcdcf0 60%, #b9c3e0); }
.vtrack { flex: 108; }

/* sheet tabs */
.sheet-bar { display: flex; flex: none; height: 16px; background: #a9c0e8; border-bottom: 1px solid #7288b4; }
.sheet-nav { display: flex; gap: 6px; width: 60px; padding-left: 4px; border-right: 1px solid #a9bbdf; background: #c8d8f6; }
.sheet-tab { width: 62px; font-size: 12px; line-height: 15px; color: #44609c; background: linear-gradient(115deg, transparent 5px, #8ea5cf 5px, #8ea5cf 6px, transparent 6px), linear-gradient(#d9e5fb, #bcd0f4); }
.sheet-nav + .sheet-tab { width: 69px; background: linear-gradient(#d9e5fb, #bcd0f4); }
.sheet-tab.active { width: 74px; font-weight: bold; font-size: 12px; color: #263a68; background: #fff; }
.new-sheet { width: 42px; background: #d3dff7; clip-path: polygon(8px 0, 100% 0, 32px 100%, 0 100%); }
.hscroll { display: flex; flex: 1; max-width: 392px; margin-left: auto; padding-right: 15px; background: #8ca3cf; }
.hscroll button { width: 17px; }
.grab { width: 4px; border: 1px solid #6a80b0; background: #fff; }
.hthumb { flex: 282; border: 1px solid #6a7fae; background: repeating-linear-gradient(90deg, #8a8fa8 0 1px, transparent 1px 2px) center / 8px 7px no-repeat, linear-gradient(#f4f4fc, #d2d2e6); }
.htrack { flex: 53; }

/* status bar */
.status { display: flex; flex: none; align-items: center; height: 20px; padding: 0 5px 1px 0; background: linear-gradient(#dbe8fd, #c3d6f8 50%, #a9c3f0); }
.ready { padding: 0 8px 0 7px; border-right: 1px solid #9db3dc; }
.views { display: flex; margin-left: auto; border: 1px solid #8fa3cc; background: #dde3f2; }
.views button { width: 17px; height: 15px; }
.views .on { background: #fbd48c; }
.status label { margin: 0 8px; }
.status input { appearance: none; width: 96px; height: 14px; margin: 0; background: linear-gradient(#6f86b4, #6f86b4) center / 100% 1px no-repeat; }
.status input::-webkit-slider-thumb { appearance: none; width: 9px; height: 12px; background: #f2f4fb; border: 1px solid #556; border-radius: 1px 1px 4px 4px; }

/* taskbar */
.taskbar { display: flex; flex: none; align-items: center; height: 28px; background: linear-gradient(#4a8af0, #2a5fd8 15%, #2558d4 85%, #1d45ae); color: #fff; }
.start { align-self: stretch; width: 90px; gap: 4px; padding-right: 6px; border-radius: 0 8px 8px 0; background: linear-gradient(#6cba64, #38903a 20%, #358c38 80%, #256a28); font: italic bold 16px/26px "Open Sans", sans-serif; color: #fff; box-shadow: inset -3px 0 4px #24692a; }
.launch { display: flex; align-items: center; gap: 6px; width: 94px; padding-left: 10px; }
.launch a { text-decoration: none; }
.ebay { font-size: 9px; line-height: 9px; background: #fff; color: #d22; }
.ebay b:nth-child(2) { color: #22a; }
.ebay b:nth-child(3) { color: #da2; }
.ebay b:nth-child(4) { color: #282; }
.chevrons { align-self: flex-start; font-size: 13px; line-height: 13px; }
.task { width: 148px; height: 23px; margin-right: 3px; padding: 0 9px; justify-content: flex-start; border-radius: 2px; background: linear-gradient(#5c98f8, #3c7cec); color: #fff; }
.task.pressed { background: #1f4cae; box-shadow: inset 1px 1px 2px #143480; }
.lang { margin-left: auto; margin-right: 14px; }
.tray { display: flex; align-items: center; align-self: stretch; gap: 2px; padding-right: 14px; background: linear-gradient(90deg, transparent 8px, #1a96ea 8px); }
.tray time { margin-left: 8px; }
```
